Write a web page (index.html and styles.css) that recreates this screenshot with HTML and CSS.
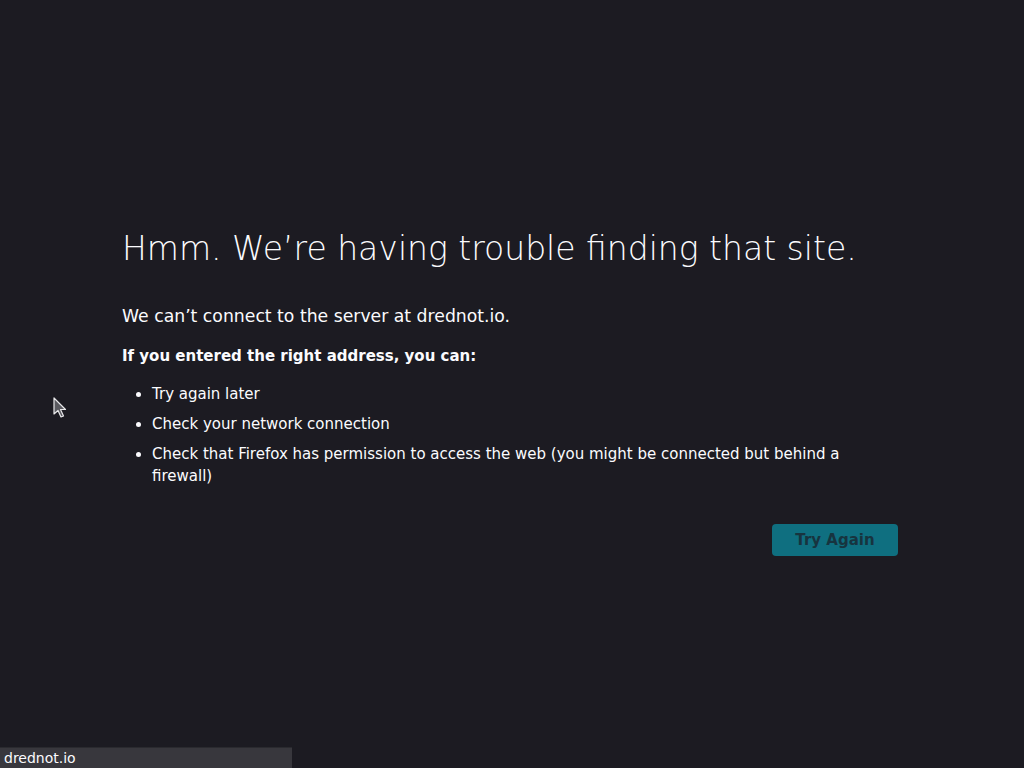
FILE: index.html
```html
<!DOCTYPE html>
<html lang="en">
<head>
<meta charset="utf-8">
<title>Problem loading page</title>
<link rel="stylesheet" href="styles.css">
</head>
<body>
<div class="page">
  <main class="container">
    <h1 class="title">Hmm. We’re having trouble finding that site.</h1>
    <p class="short-desc">We can’t connect to the server at drednot.io.</p>
    <p class="strong">If you entered the right address, you can:</p>
    <ul class="tips">
      <li>Try again later</li>
      <li>Check your network connection</li>
      <li>Check that Firefox has permission to access the web (you might be connected but behind a firewall)</li>
    </ul>
    <div class="actions">
      <button class="try-again">Try Again</button>
    </div>
  </main>
</div>
<div class="status">drednot.io</div>
<svg class="cursor" width="14" height="22" viewBox="0 0 14 22">
  <path d="M1 1 L1 17 L5 13.5 L8 20 L10.5 19 L7.5 12.5 L12.5 12.5 Z" fill="#5a5a60" stroke="#e8e8ea" stroke-width="1.2" stroke-linejoin="round"/>
</svg>
</body>
</html>
```

FILE: styles.css
```css
html, body {
  margin: 0;
  padding: 0;
  height: 100%;
}
body {
  background: #1c1b22;
  color: #fbfbfe;
  font-family: "DejaVu Sans", sans-serif;
  font-size: 15px;
  overflow: hidden;
}
.page {
  height: 768px;
  display: flex;
  justify-content: center;
  box-sizing: border-box;
  padding-top: 228px;
}
.container {
  width: 780px;
}
.title {
  font-size: 33px;
  font-weight: 200;
  margin: 0 0 33px;
  line-height: 1.3;
}
.short-desc {
  font-size: 17.25px;
  margin: 0 0 17px;
  line-height: 1.4;
}
.strong {
  font-weight: bold;
  margin: 0 0 15px;
  line-height: 1.5;
}
.tips {
  margin: 0;
  padding-left: 30px;
  line-height: 22px;
}
.tips li {
  margin-bottom: 8px;
  padding-right: 40px;
}
.tips li:last-child {
  margin-bottom: 0;
}
.actions {
  display: flex;
  justify-content: flex-end;
  margin-top: 37px;
  padding-right: 4px;
}
.try-again {
  font-family: "DejaVu Sans", sans-serif;
  font-size: 15px;
  font-weight: bold;
  color: #17343f;
  background: #0f6f80;
  border: none;
  border-radius: 4px;
  width: 126px;
  height: 32px;
  padding: 0;
}
.status {
  position: absolute;
  left: 0;
  bottom: 0;
  width: 292px;
  height: 21px;
  background: #38373d;
  border-top: 1px solid #2a2a2f;
  color: #fbfbfe;
  font-size: 14px;
  line-height: 21px;
  padding-left: 4px;
  box-sizing: border-box;
}
.cursor {
  position: absolute;
  left: 53px;
  top: 397px;
}
```
